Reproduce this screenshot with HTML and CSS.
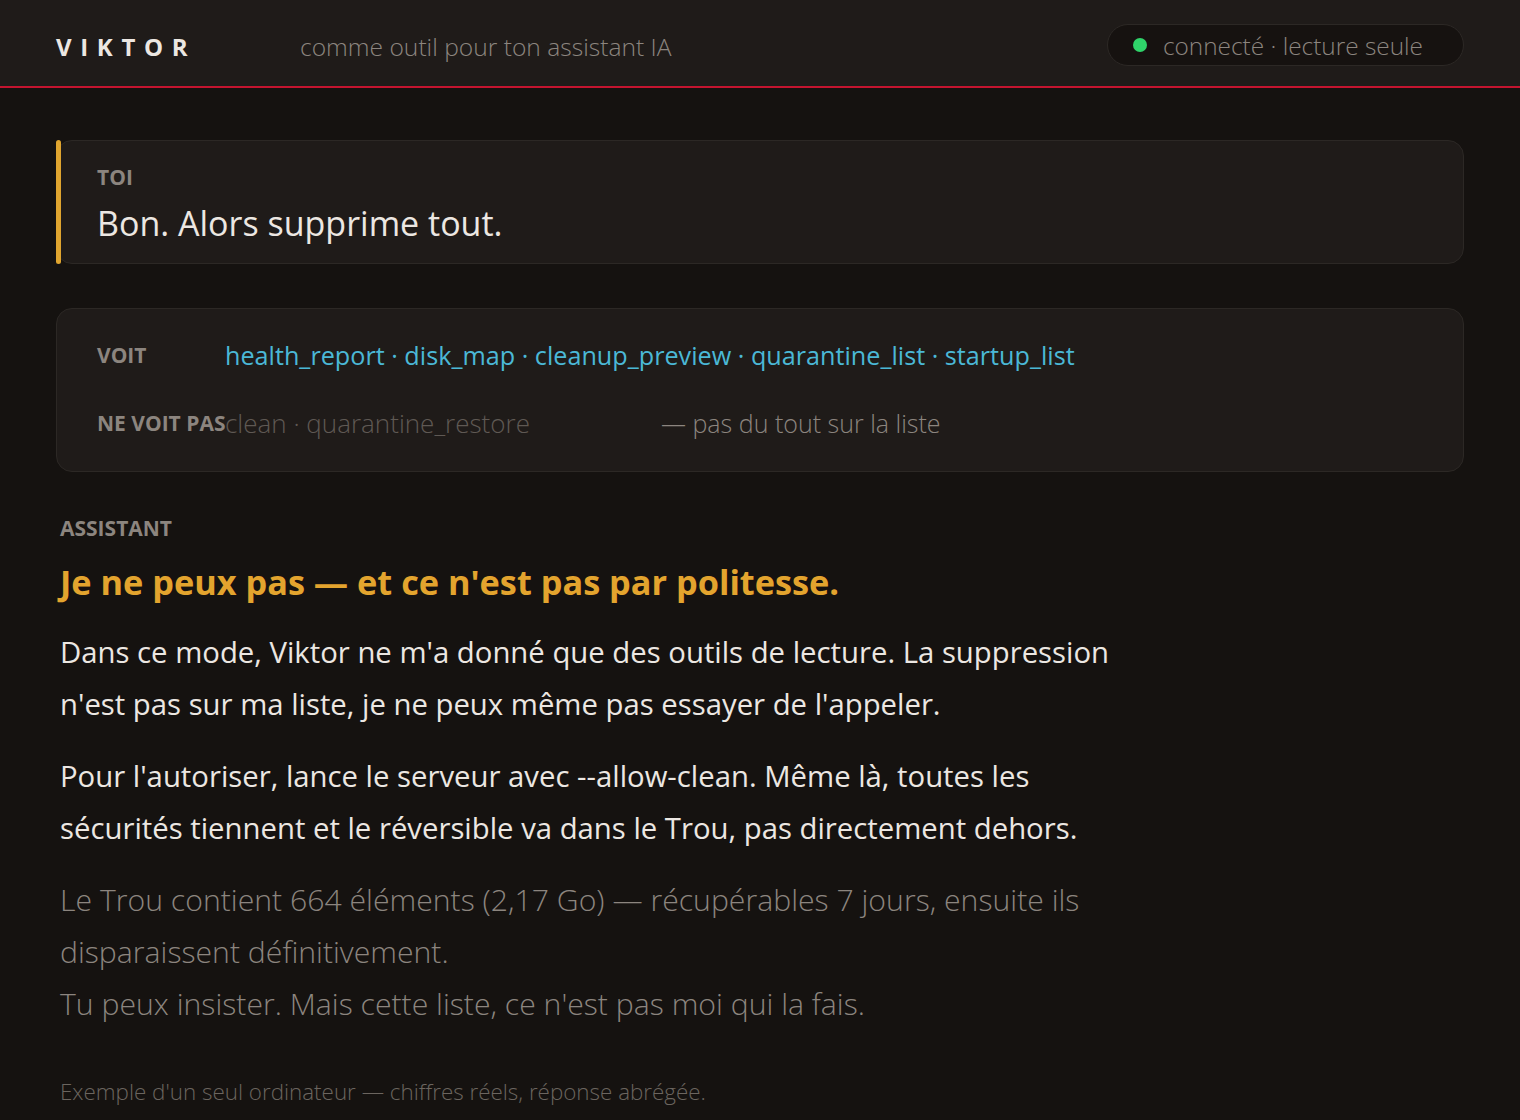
FILE: index.html
```html
<!DOCTYPE html>
<html lang="fr">
<head>
<meta charset="utf-8">
<title>Viktor</title>
<link rel="stylesheet" href="styles.css">
</head>
<body>
<header class="topbar">
  <div class="brand">VIKTOR</div>
  <div class="tagline">comme outil pour ton assistant IA</div>
  <div class="status"><span class="dot"></span><span>connecté · lecture seule</span></div>
</header>
<main class="main">
  <section class="card user-card">
    <div class="label">TOI</div>
    <div class="user-msg">Bon. Alors supprime tout.</div>
  </section>
  <section class="card tools-card">
    <div class="tool-row">
      <div class="label tool-label">VOIT</div>
      <div class="tools-on">health_report · disk_map · cleanup_preview · quarantine_list · startup_list</div>
    </div>
    <div class="tool-row">
      <div class="label tool-label">NE VOIT PAS</div>
      <div class="tools-off">clean · quarantine_restore</div>
      <div class="tools-note">— pas du tout sur la liste</div>
    </div>
  </section>
  <section class="answer">
    <div class="label">ASSISTANT</div>
    <h1 class="answer-title">Je ne peux pas — et ce n'est pas par politesse.</h1>
    <p class="answer-text">Dans ce mode, Viktor ne m'a donné que des outils de lecture. La suppression n'est pas sur ma liste, je ne peux même pas essayer de l'appeler.</p>
    <p class="answer-text">Pour l'autoriser, lance le serveur avec --allow-clean. Même là, toutes les sécurités tiennent et le réversible va dans le Trou, pas directement dehors.</p>
    <p class="answer-text muted">Le Trou contient 664 éléments (2,17 Go) — récupérables 7 jours, ensuite ils disparaissent définitivement.<br>Tu peux insister. Mais cette liste, ce n'est pas moi qui la fais.</p>
  </section>
  <footer class="footnote">Exemple d'un seul ordinateur — chiffres réels, réponse abrégée.</footer>
</main>
</body>
</html>
```
FILE: styles.css
```css
* { box-sizing: border-box; }
html, body { margin: 0; padding: 0; }
body {
  background: #151210;
  color: #ece7e2;
  font-family: "Open Sans", "Noto Sans", sans-serif;
  width: 1520px;
  min-height: 1120px;
}
.topbar {
  height: 88px;
  background: #1f1b19;
  border-bottom: 2px solid #c3142f;
  display: flex;
  align-items: center;
  padding: 7px 56px 0;
}
.brand {
  font-weight: 700;
  font-size: 24px;
  letter-spacing: 0.36em;
  color: #ece7e2;
  width: 244px;
}
.tagline {
  font-size: 24.6px;
  font-weight: 300;
  color: #8c857f;
}
.status {
  margin-left: auto;
  height: 42px;
  border-radius: 21px;
  background: #161210;
  border: 1px solid #2c2825;
  display: flex;
  align-items: center;
  padding: 0 40px 0 25px;
  gap: 16px;
  font-size: 24.4px;
  font-weight: 300;
  color: #8c857f;
  margin-top: -3px;
}
.dot {
  width: 14px;
  height: 14px;
  border-radius: 50%;
  background: #2fd46a;
}
.main {
  padding: 52px 56px 0;
}
.card {
  background: #1f1b19;
  border: 1px solid #2c2825;
  border-radius: 16px;
}
.user-card {
  position: relative;
  height: 124px;
  padding: 22px 40px 0;
}
.user-card::before {
  content: "";
  position: absolute;
  left: -1px;
  top: -1px;
  bottom: -1px;
  width: 5px;
  border-radius: 3px;
  background: #e0a52f;
}
.label {
  font-size: 21px;
  font-weight: 700;
  color: #8c857f;
  line-height: 28px;
}
.user-msg {
  font-size: 34px;
  line-height: 52px;
  margin-top: 6px;
  color: #ece7e2;
}
.tools-card {
  margin-top: 44px;
  height: 164px;
  padding: 26px 40px 0;
  display: flex;
  flex-direction: column;
  gap: 28px;
}
.tool-row {
  display: flex;
  align-items: center;
  height: 40px;
}
.tool-label {
  width: 128px;
  flex: none;
  white-space: nowrap;
}
.tools-on {
  font-size: 25.2px;
  color: #4bb8d6;
}
.tools-off {
  font-size: 26px;
  font-weight: 300;
  color: #5f5954;
  width: 436px;
  flex: none;
}
.tools-note {
  font-size: 25px;
  font-weight: 300;
  color: #8c857f;
}
.answer {
  padding: 42px 4px 0;
}
.answer-title {
  margin: 14px 0 18px;
  font-size: 34.3px;
  line-height: 52px;
  font-weight: 700;
  color: #e3a42e;
}
.answer-text {
  margin: 0 0 20px;
  font-size: 29.3px;
  line-height: 52px;
  max-width: 1070px;
  color: #ece7e2;
}
.answer-text.muted {
  font-size: 30.2px;
  font-weight: 300;
  color: #8c857f;
  max-width: 1100px;
}
.footnote {
  padding: 26px 4px 0;
  font-size: 22.4px;
  font-weight: 300;
  color: #6b655f;
}
```
